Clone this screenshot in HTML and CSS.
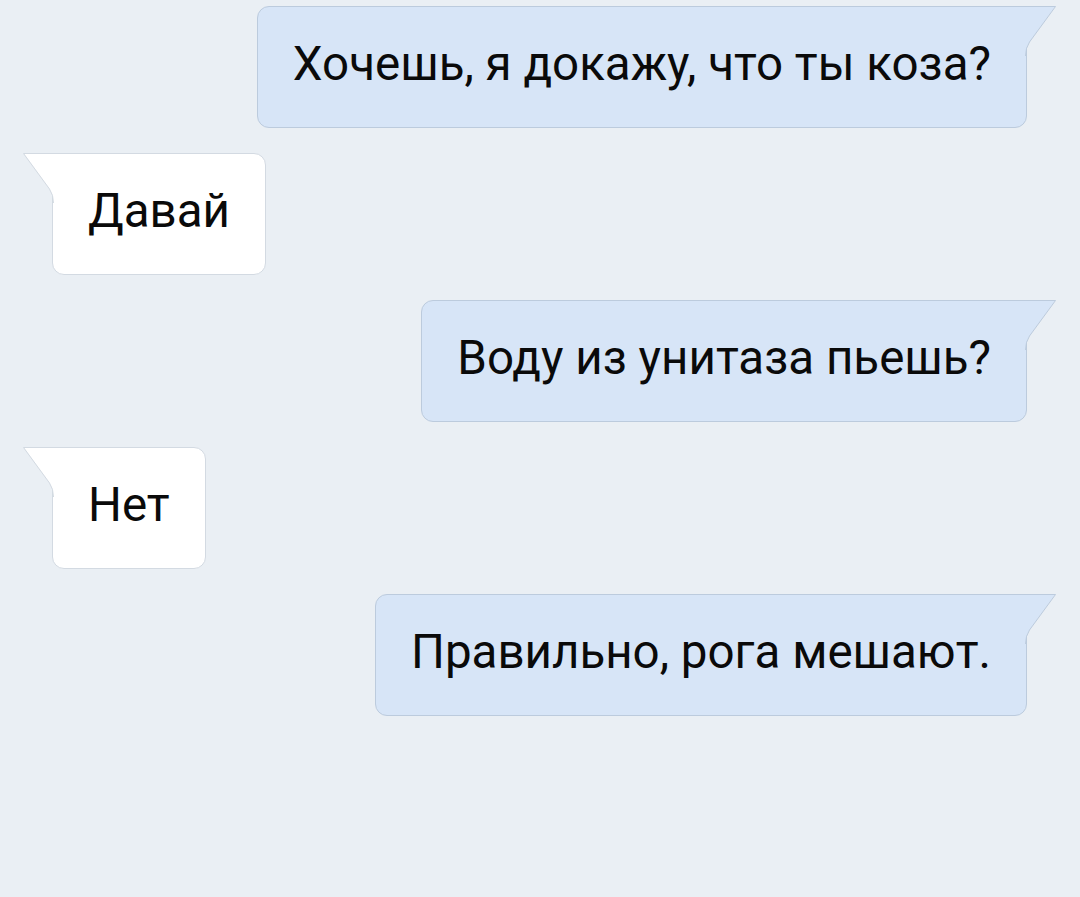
FILE: index.html
```html
<!DOCTYPE html>
<html lang="ru">
<head>
    <meta charset="UTF-8">
    <meta name="viewport" content="width=device-width, initial-scale=1.0">
    <title>Chat</title>
    <link rel="stylesheet" href="styles.css">
</head>
<body>

    <div class="chat">
        <div class="row out">
            <div class="bubble">
                Хочешь, я докажу, что ты коза?
                <svg class="tail" width="32" height="50" viewBox="0 0 32 50">
                    <path class="tail-fill" d="M0 0 H30.5 L4.5 36 Q0.5 42 0.5 50 H0 Z"/>
                    <path class="tail-line" d="M0 0.5 H30.5 L4.5 36 Q0.5 42 0.5 50"/>
                </svg>
            </div>
        </div>

        <div class="row in">
            <div class="bubble">
                Давай
                <svg class="tail" width="32" height="50" viewBox="0 0 32 50">
                    <path class="tail-fill" d="M0 0 H30.5 L4.5 36 Q0.5 42 0.5 50 H0 Z"/>
                    <path class="tail-line" d="M0 0.5 H30.5 L4.5 36 Q0.5 42 0.5 50"/>
                </svg>
            </div>
        </div>

        <div class="row out">
            <div class="bubble">
                Воду из унитаза пьешь?
                <svg class="tail" width="32" height="50" viewBox="0 0 32 50">
                    <path class="tail-fill" d="M0 0 H30.5 L4.5 36 Q0.5 42 0.5 50 H0 Z"/>
                    <path class="tail-line" d="M0 0.5 H30.5 L4.5 36 Q0.5 42 0.5 50"/>
                </svg>
            </div>
        </div>

        <div class="row in">
            <div class="bubble">
                Нет
                <svg class="tail" width="32" height="50" viewBox="0 0 32 50">
                    <path class="tail-fill" d="M0 0 H30.5 L4.5 36 Q0.5 42 0.5 50 H0 Z"/>
                    <path class="tail-line" d="M0 0.5 H30.5 L4.5 36 Q0.5 42 0.5 50"/>
                </svg>
            </div>
        </div>

        <div class="row out">
            <div class="bubble">
                Правильно, рога мешают.
                <svg class="tail" width="32" height="50" viewBox="0 0 32 50">
                    <path class="tail-fill" d="M0 0 H30.5 L4.5 36 Q0.5 42 0.5 50 H0 Z"/>
                    <path class="tail-line" d="M0 0.5 H30.5 L4.5 36 Q0.5 42 0.5 50"/>
                </svg>
            </div>
        </div>
    </div>

</body>
</html>
```

FILE: styles.css
```css
body {
    margin: 0;
    background-color: #eaeff4;
    font-family: Roboto, "Noto Sans", sans-serif;
    color: #0a0a0a;
    height: 100vh;
}
.chat {
    display: flex;
    flex-direction: column;
    gap: 25px;
    padding: 6px 53px 0 52px;
}
.row {
    display: flex;
}
.row.out {
    justify-content: flex-end;
}
.row.in {
    justify-content: flex-start;
}
.bubble {
    position: relative;
    box-sizing: border-box;
    height: 122px;
    display: flex;
    align-items: center;
    padding: 0 35px 6px 35px;
    font-size: 47.5px;
    border-radius: 12px;
    border: 1px solid #bccbdd;
}
.out .bubble {
    background-color: #d7e5f7;
    border-top-right-radius: 0;
}
.in .bubble {
    background-color: #ffffff;
    border-color: #d3dae2;
    border-top-left-radius: 0;
}
.tail {
    position: absolute;
    top: -1px;
    right: -31px;
}
.in .tail {
    right: auto;
    left: -31px;
    transform: scaleX(-1);
}
.tail-fill {
    fill: #d7e5f7;
}
.tail-line {
    fill: none;
    stroke: #bccbdd;
    stroke-width: 1;
}
.in .tail-fill {
    fill: #ffffff;
}
.in .tail-line {
    stroke: #d3dae2;
}
```
